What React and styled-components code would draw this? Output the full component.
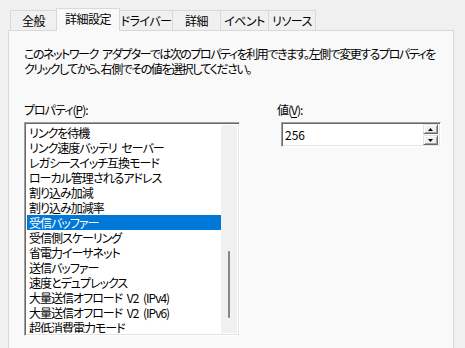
import React from 'react';
import styled, {createGlobalStyle, css} from 'styled-components';

const Global = createGlobalStyle`
    html, body {
        margin: 0;
        padding: 0;
        background: #f0f0f0;
    }
    body {
        font-family: "Noto Sans CJK JP", "Noto Sans", sans-serif;
        font-size: 12px;
        color: #000;
        overflow: hidden;
        font-feature-settings: "palt";
        letter-spacing: -1px;
        word-spacing: 3px;
    }
`;

const Sunken = css`
    box-sizing: border-box;
    border: 1px solid;
    border-color: #a0a0a0 #ffffff #ffffff #a0a0a0;
    box-shadow: inset 1px 1px 0 #696969, inset -1px -1px 0 #e3e3e3;
`;

const Window = styled.div`
    width: 465px;
    height: 348px;
    padding: 8px 0 0 8px;
    box-sizing: border-box;
    overflow: hidden;
`;

const TabRow = styled.div`
    display: flex;
    align-items: flex-end;
    height: 22px;
    padding-left: 2px;
    position: relative;
    z-index: 1;
`;

const Tab = styled.div`
    box-sizing: border-box;
    width: ${p => p.$w}px;
    height: ${p => (p.$active ? 23 : 20)}px;
    margin-bottom: ${p => (p.$active ? -1 : 0)}px;
    margin-left: -1px;
    &:first-child { margin-left: 0; }
    border: 1px solid #d9d9d9;
    border-bottom: none;
    background: ${p => (p.$active ? '#f9f9f9' : '#f0f0f0')};
    display: flex;
    align-items: center;
    justify-content: center;
    padding-bottom: ${p => (p.$active ? 2 : 0)}px;
    line-height: 1;
    letter-spacing: -0.5px;
    white-space: nowrap;
    z-index: ${p => (p.$active ? 2 : 0)};
`;

const Panel = styled.div`
    box-sizing: border-box;
    width: 446px;
    height: 330px;
    border: 1px solid #d9d9d9;
    background: #f9f9f9;
    padding: 15px 15px 0 15px;
`;

const Description = styled.p`
    margin: 0;
    line-height: 15px;
    white-space: nowrap;
    letter-spacing: -1.45px;
`;

const Fields = styled.div`
    display: grid;
    grid-template-columns: 216px 164px;
    column-gap: 37px;
    margin-top: 26px;
`;

const Field = styled.div`
    display: flex;
    flex-direction: column;
`;

const Label = styled.label`
    line-height: 15px;
    margin-bottom: 5px;
    u { text-underline-offset: 2px; }
`;

const ListBox = styled.div`
    ${Sunken}
    width: 216px;
    height: 214px;
    background: #fff;
    padding: 2px;
    display: flex;
`;

const Items = styled.div`
    flex: 1;
    overflow: hidden;
`;

const Item = styled.div`
    height: 15px;
    line-height: 15px;
    padding-left: 2px;
    white-space: nowrap;
    background: ${p => (p.$selected ? '#0078d7' : 'transparent')};
    color: ${p => (p.$selected ? '#fff' : '#000')};
`;

const ScrollTrack = styled.div`
    width: 16px;
    background: #f0f0f0;
    display: flex;
    flex-direction: column;
    align-items: center;
    padding-top: 126px;
    box-sizing: border-box;
`;

const Thumb = styled.div`
    width: 2px;
    height: 67px;
    border-radius: 1px;
    background: #858585;
`;

const Spin = styled.div`
    ${Sunken}
    width: 160px;
    height: 25px;
    margin-left: 4px;
    background: #fff;
    display: flex;
    align-items: center;
    justify-content: space-between;
    padding: 2px 2px 2px 3px;
`;

const SpinValue = styled.span`
    line-height: 15px;
    letter-spacing: 0;
`;

const SpinButtons = styled.div`
    display: flex;
    flex-direction: column;
    gap: 1px;
`;

const SpinButton = styled.div`
    box-sizing: border-box;
    width: 15px;
    height: 10px;
    background: #f0f0f0;
    border: 1px solid;
    border-color: #e3e3e3 #696969 #696969 #e3e3e3;
    box-shadow: inset 1px 1px 0 #fff, inset -1px -1px 0 #a0a0a0;
    display: flex;
    align-items: center;
    justify-content: center;
`;

const tabs = [
    {label: '全般', w: 47},
    {label: '詳細設定', w: 64, active: true},
    {label: 'ドライバー', w: 54},
    {label: '詳細', w: 49},
    {label: 'イベント', w: 49},
    {label: 'リソース', w: 48},
];

const properties = [
    'リンクを待機',
    'リンク速度バッテリ セーバー',
    'レガシースイッチ互換モード',
    'ローカル管理されるアドレス',
    '割り込み加減',
    '割り込み加減率',
    '受信バッファー',
    '受信側スケーリング',
    '省電力イーサネット',
    '送信バッファー',
    '速度とデュプレックス',
    '大量送信オフロード V2 (IPv4)',
    '大量送信オフロード V2 (IPv6)',
    '超低消費電力モード',
];

function Arrow({up}) {
    return <svg width="5" height="3" viewBox="0 0 5 3">
        <polygon points={up ? '2.5,0 5,3 0,3' : '0,0 5,0 2.5,3'} fill="#000" />
    </svg>;
}

export default function App() {
    const [selected, setSelected] = React.useState('受信バッファー');

    return <Window>
        <Global />
        <TabRow>
            {tabs.map(t => <Tab key={t.label} $w={t.w} $active={t.active}>{t.label}</Tab>)}
        </TabRow>
        <Panel>
            <Description>
                このネットワーク アダプターでは次のプロパティを利用できます。左側で変更するプロパティを<br />
                クリックしてから、右側でその値を選択してください。
            </Description>
            <Fields>
                <Field>
                    <Label>プロパティ(<u>P</u>):</Label>
                    <ListBox>
                        <Items>
                            {properties.map(p =>
                                <Item key={p} $selected={p === selected} onClick={() => setSelected(p)}>{p}</Item>
                            )}
                        </Items>
                        <ScrollTrack>
                            <Thumb />
                        </ScrollTrack>
                    </ListBox>
                </Field>
                <Field>
                    <Label>値(<u>V</u>):</Label>
                    <Spin>
                        <SpinValue>256</SpinValue>
                        <SpinButtons>
                            <SpinButton><Arrow up /></SpinButton>
                            <SpinButton><Arrow /></SpinButton>
                        </SpinButtons>
                    </Spin>
                </Field>
            </Fields>
        </Panel>
    </Window>;
}
